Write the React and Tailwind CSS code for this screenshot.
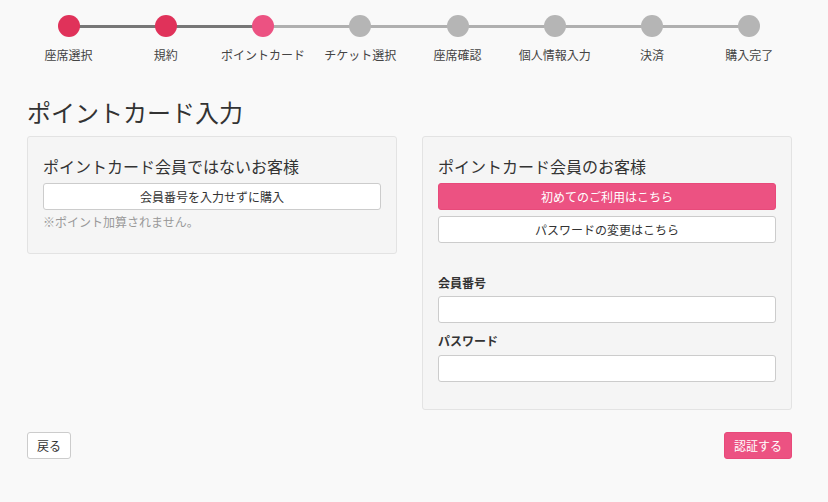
import React from 'react';

const steps = [
  { label: '座席選択', state: 'done' },
  { label: '規約', state: 'done' },
  { label: 'ポイントカード', state: 'current' },
  { label: 'チケット選択', state: 'todo' },
  { label: '座席確認', state: 'todo' },
  { label: '個人情報入力', state: 'todo' },
  { label: '決済', state: 'todo' },
  { label: '購入完了', state: 'todo' },
];

const dotColor = {
  done: 'bg-[#e0325a]',
  current: 'bg-[#ec5282]',
  todo: 'bg-[#b5b5b5]',
};

const Stepper = () => (
  <div className="ml-[20px] grid w-[778px] grid-cols-8 pt-[15px]">
    {steps.map((step, i) => (
      <div key={step.label} className="flex flex-col items-center">
        <div className="relative flex h-[22px] w-full items-center justify-center">
          {i > 0 && (
            <div
              className={`absolute left-0 right-1/2 top-[10px] h-[3px] ${
                step.state === 'todo' ? 'bg-[#b0b0b0]' : 'bg-[#777777]'
              }`}
            />
          )}
          {i < steps.length - 1 && (
            <div
              className={`absolute left-1/2 right-0 top-[10px] h-[3px] ${
                steps[i + 1].state === 'todo' ? 'bg-[#b0b0b0]' : 'bg-[#777777]'
              }`}
            />
          )}
          <div className={`relative h-[22px] w-[22px] rounded-full ${dotColor[step.state]}`} />
        </div>
        <div className="mt-[10px] text-[12px] leading-[16px] text-[#444]">{step.label}</div>
      </div>
    ))}
  </div>
);

const App = () => {
  return (
    <div
      className="min-h-[502px] w-full bg-[#f9f9f9] text-[#333]"
      style={{ fontFamily: '"Noto Sans CJK JP", "Noto Sans", sans-serif' }}
    >
      <Stepper />
      <div className="ml-[27px] w-[765px]">
        <h1 className="mt-[34px] text-[24px] font-normal leading-[30px] text-[#333]">ポイントカード入力</h1>

        <div className="mt-[9px] flex items-start justify-between">
          <div className="w-[370px] rounded-[3px] border border-[#e3e3e3] bg-[#f5f5f5] px-[15px] pb-[22px] pt-[17px]">
            <h2 className="text-[16px] leading-[24px] text-[#333]">ポイントカード会員ではないお客様</h2>
            <button className="mt-[5px] h-[27px] w-full rounded-[3px] border border-[#ccc] bg-white text-[12px] text-[#333]">
              会員番号を入力せずに購入
            </button>
            <p className="mt-[3px] text-[12px] leading-[18px] text-[#999]">※ポイント加算されません。</p>
          </div>

          <div className="w-[370px] rounded-[3px] border border-[#e3e3e3] bg-[#f5f5f5] px-[15px] pb-[27px] pt-[17px]">
            <h2 className="text-[16px] leading-[24px] text-[#333]">ポイントカード会員のお客様</h2>
            <button className="mt-[5px] h-[27px] w-full rounded-[3px] border border-[#e84a7a] bg-[#ec5282] text-[12px] text-white">
              初めてのご利用はこちら
            </button>
            <button className="mt-[6px] h-[27px] w-full rounded-[3px] border border-[#ccc] bg-white text-[12px] text-[#333]">
              パスワードの変更はこちら
            </button>
            <label className="mt-[32px] block text-[12px] font-bold leading-[16px] text-[#333]">会員番号</label>
            <input className="mt-[5px] block h-[27px] w-full rounded-[3px] border border-[#ccc] bg-white" />
            <label className="mt-[10px] block text-[12px] font-bold leading-[16px] text-[#333]">パスワード</label>
            <input type="password" className="mt-[6px] block h-[27px] w-full rounded-[3px] border border-[#ccc] bg-white" />
          </div>
        </div>

        <div className="mt-[22px] flex justify-between">
          <button className="h-[27px] rounded-[3px] border border-[#ccc] bg-white px-[9px] text-[12px] text-[#333]">戻る</button>
          <button className="h-[27px] rounded-[3px] border border-[#e84a7a] bg-[#ec5282] px-[9px] text-[12px] text-white">認証する</button>
        </div>
      </div>
    </div>
  );
};

export default App;
